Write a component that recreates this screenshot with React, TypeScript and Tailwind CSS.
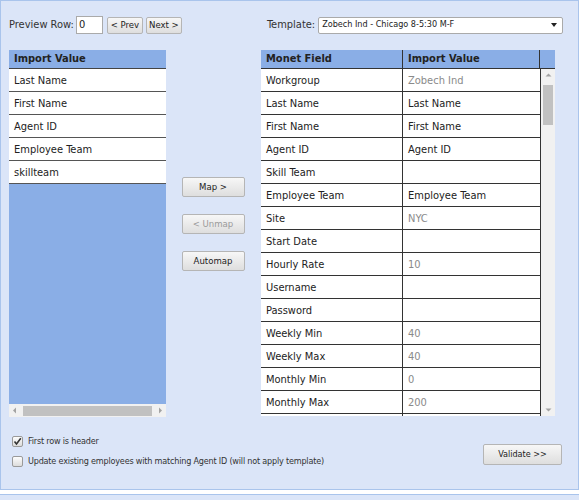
import React from "react";

const font = { fontFamily: '"DejaVu Sans Condensed", "DejaVu Sans", sans-serif' };

const leftRows = ["Last Name", "First Name", "Agent ID", "Employee Team", "skillteam"];

const rightRows: [string, string, boolean][] = [
  ["Workgroup", "Zobech Ind", true],
  ["Last Name", "Last Name", false],
  ["First Name", "First Name", false],
  ["Agent ID", "Agent ID", false],
  ["Skill Team", "", false],
  ["Employee Team", "Employee Team", false],
  ["Site", "NYC", true],
  ["Start Date", "", false],
  ["Hourly Rate", "10", true],
  ["Username", "", false],
  ["Password", "", false],
  ["Weekly Min", "40", true],
  ["Weekly Max", "40", true],
  ["Monthly Min", "0", true],
  ["Monthly Max", "200", true],
  ["", "", false],
];

function Btn({ children, className = "", disabled = false }: { children: React.ReactNode; className?: string; disabled?: boolean }) {
  return (
    <div
      className={`flex items-center justify-center border border-[#b5b5b5] rounded-[2px] bg-gradient-to-b from-[#f7f7f7] to-[#dedede] ${disabled ? "text-[#9a9a9a]" : "text-[#222]"} ${className}`}
    >
      {children}
    </div>
  );
}

function Check({ checked }: { checked: boolean }) {
  return (
    <div className="w-[11px] h-[11px] border border-[#9a9a9a] rounded-[2px] bg-gradient-to-b from-[#fdfdfd] to-[#dcdcdc] flex items-center justify-center">
      {checked && (
        <svg width="9" height="9" viewBox="0 0 9 9">
          <path d="M1.5 4.5 L3.5 7 L7.8 1.2" stroke="#333" strokeWidth="1.6" fill="none" />
        </svg>
      )}
    </div>
  );
}

export default function App() {
  return (
    <div className="w-[579px] h-[500px] bg-white overflow-hidden text-[#222]" style={font}>
      <div className="h-[490px] border border-[#a9c4ec] bg-[#dbe5f8] flex flex-col">
        {/* top row */}
        <div className="flex items-center h-[18px] mt-[15px] pl-[8px] text-[11px]">
          <span className="text-[#333]">Preview Row:</span>
          <div className="ml-[2px] w-[27px] h-[18px] bg-white border border-[#aaa] text-[11px] pl-[2px] leading-[16px]">0</div>
          <Btn className="ml-[4px] w-[36px] h-[17px] text-[9.5px]">&lt; Prev</Btn>
          <Btn className="ml-[3px] w-[36px] h-[17px] text-[9.5px]">Next &gt;</Btn>
          <span className="ml-[85px] text-[#333]">Template:</span>
          <div className="ml-[3px] w-[245px] h-[17px] bg-white border border-[#aaa] rounded-[2px] flex items-center justify-between px-[3px] text-[9px]">
            <span>Zobech Ind - Chicago 8-5:30 M-F</span>
            <svg width="8" height="6" viewBox="0 0 8 6" className="mr-[1px]">
              <path d="M1 1 L7 1 L4 5 Z" fill="#222" />
            </svg>
          </div>
        </div>

        {/* main area */}
        <div className="flex mt-[16px] pl-[8px]">
          {/* left list */}
          <div className="w-[157px] h-[367px] flex flex-col">
            <div className="h-[19px] bg-[#8aaee6] border-b border-[#444] flex items-center pl-[5px] pt-[1px] text-[11px] font-bold">Import Value</div>
            <div className="flex-1 bg-[#8aaee6] flex flex-col">
              {leftRows.map((r) => (
                <div key={r} className="h-[23px] bg-white border-b border-[#555] flex items-center pl-[5px] pt-[2px] text-[11px]">
                  {r}
                </div>
              ))}
            </div>
            <div className="h-[13px] bg-[#f1f1f1] flex items-center px-[3px] gap-[6px]">
              <svg width="5" height="7" viewBox="0 0 5 7"><path d="M4 0.5 L1 3.5 L4 6.5 Z" fill="#a3a3a3" /></svg>
              <div className="flex-1 h-[10px] bg-[#c1c1c1]" />
              <svg width="5" height="7" viewBox="0 0 5 7"><path d="M1 0.5 L4 3.5 L1 6.5 Z" fill="#a3a3a3" /></svg>
            </div>
          </div>

          {/* middle buttons */}
          <div className="w-[95px] flex flex-col items-center pt-[127px] gap-[17px] pr-[1px]">
            <Btn className="w-[63px] h-[20px] text-[9.5px]">Map &gt;</Btn>
            <Btn className="w-[63px] h-[20px] text-[9.5px]" disabled>&lt; Unmap</Btn>
            <Btn className="w-[63px] h-[20px] text-[9.5px]">Automap</Btn>
          </div>

          {/* right table */}
          <div className="w-[294px] h-[366px] flex flex-col">
            <div className="h-[19px] bg-[#8aaee6] border-b border-[#333] flex text-[11px] font-bold">
              <div className="w-[142px] border-r border-[#333] flex items-center pl-[5px] pt-[1px]">Monet Field</div>
              <div className="w-[137px] border-r border-[#333] flex items-center pl-[5px] pt-[1px]">Import Value</div>
              <div className="flex-1" />
            </div>
            <div className="flex-1 flex overflow-hidden">
              <div className="w-[280px] border-r border-[#333] overflow-hidden bg-white">
                {rightRows.map(([f, v, g], i) => (
                  <div key={i} className="h-[23px] border-b border-[#333] flex text-[11px]">
                    <div className="w-[142px] border-r border-[#333] flex items-center pl-[5px] pt-[2px]">{f}</div>
                    <div className={`flex-1 flex items-center pl-[5px] pt-[2px] ${g ? "text-[#8a8a8a]" : ""}`}>{v}</div>
                  </div>
                ))}
              </div>
              <div className="flex-1 bg-[#f1f1f1] flex flex-col items-center py-[4px]">
                <svg width="7" height="4" viewBox="0 0 7 4"><path d="M0.5 3.5 L3.5 0.5 L6.5 3.5 Z" fill="#a3a3a3" /></svg>
                <div className="mt-[8px] w-[10px] h-[40px] bg-[#c1c1c1]" />
                <div className="flex-1" />
                <svg width="7" height="4" viewBox="0 0 7 4"><path d="M0.5 0.5 L6.5 0.5 L3.5 3.5 Z" fill="#a3a3a3" /></svg>
              </div>
            </div>
          </div>
        </div>

        {/* bottom */}
        <div className="flex mt-[19px] pl-[11px] pr-[16px]">
          <div className="flex flex-col gap-[9px] text-[9px] tracking-[-0.2px] text-[#333]">
            <div className="flex items-center gap-[5px] h-[11px]">
              <Check checked />
              <span>First row is header</span>
            </div>
            <div className="flex items-center gap-[5px] h-[11px]">
              <Check checked={false} />
              <span>Update existing employees with matching Agent ID (will not apply template)</span>
            </div>
          </div>
          <div className="flex-1" />
          <Btn className="w-[79px] h-[21px] mt-[8px] text-[9px]">Validate &gt;&gt;</Btn>
        </div>
      </div>
      <div className="h-[4px] bg-white" />
      <div className="h-[6px] border-t border-[#a9c4ec] bg-[#dbe5f8]" />
    </div>
  );
}
